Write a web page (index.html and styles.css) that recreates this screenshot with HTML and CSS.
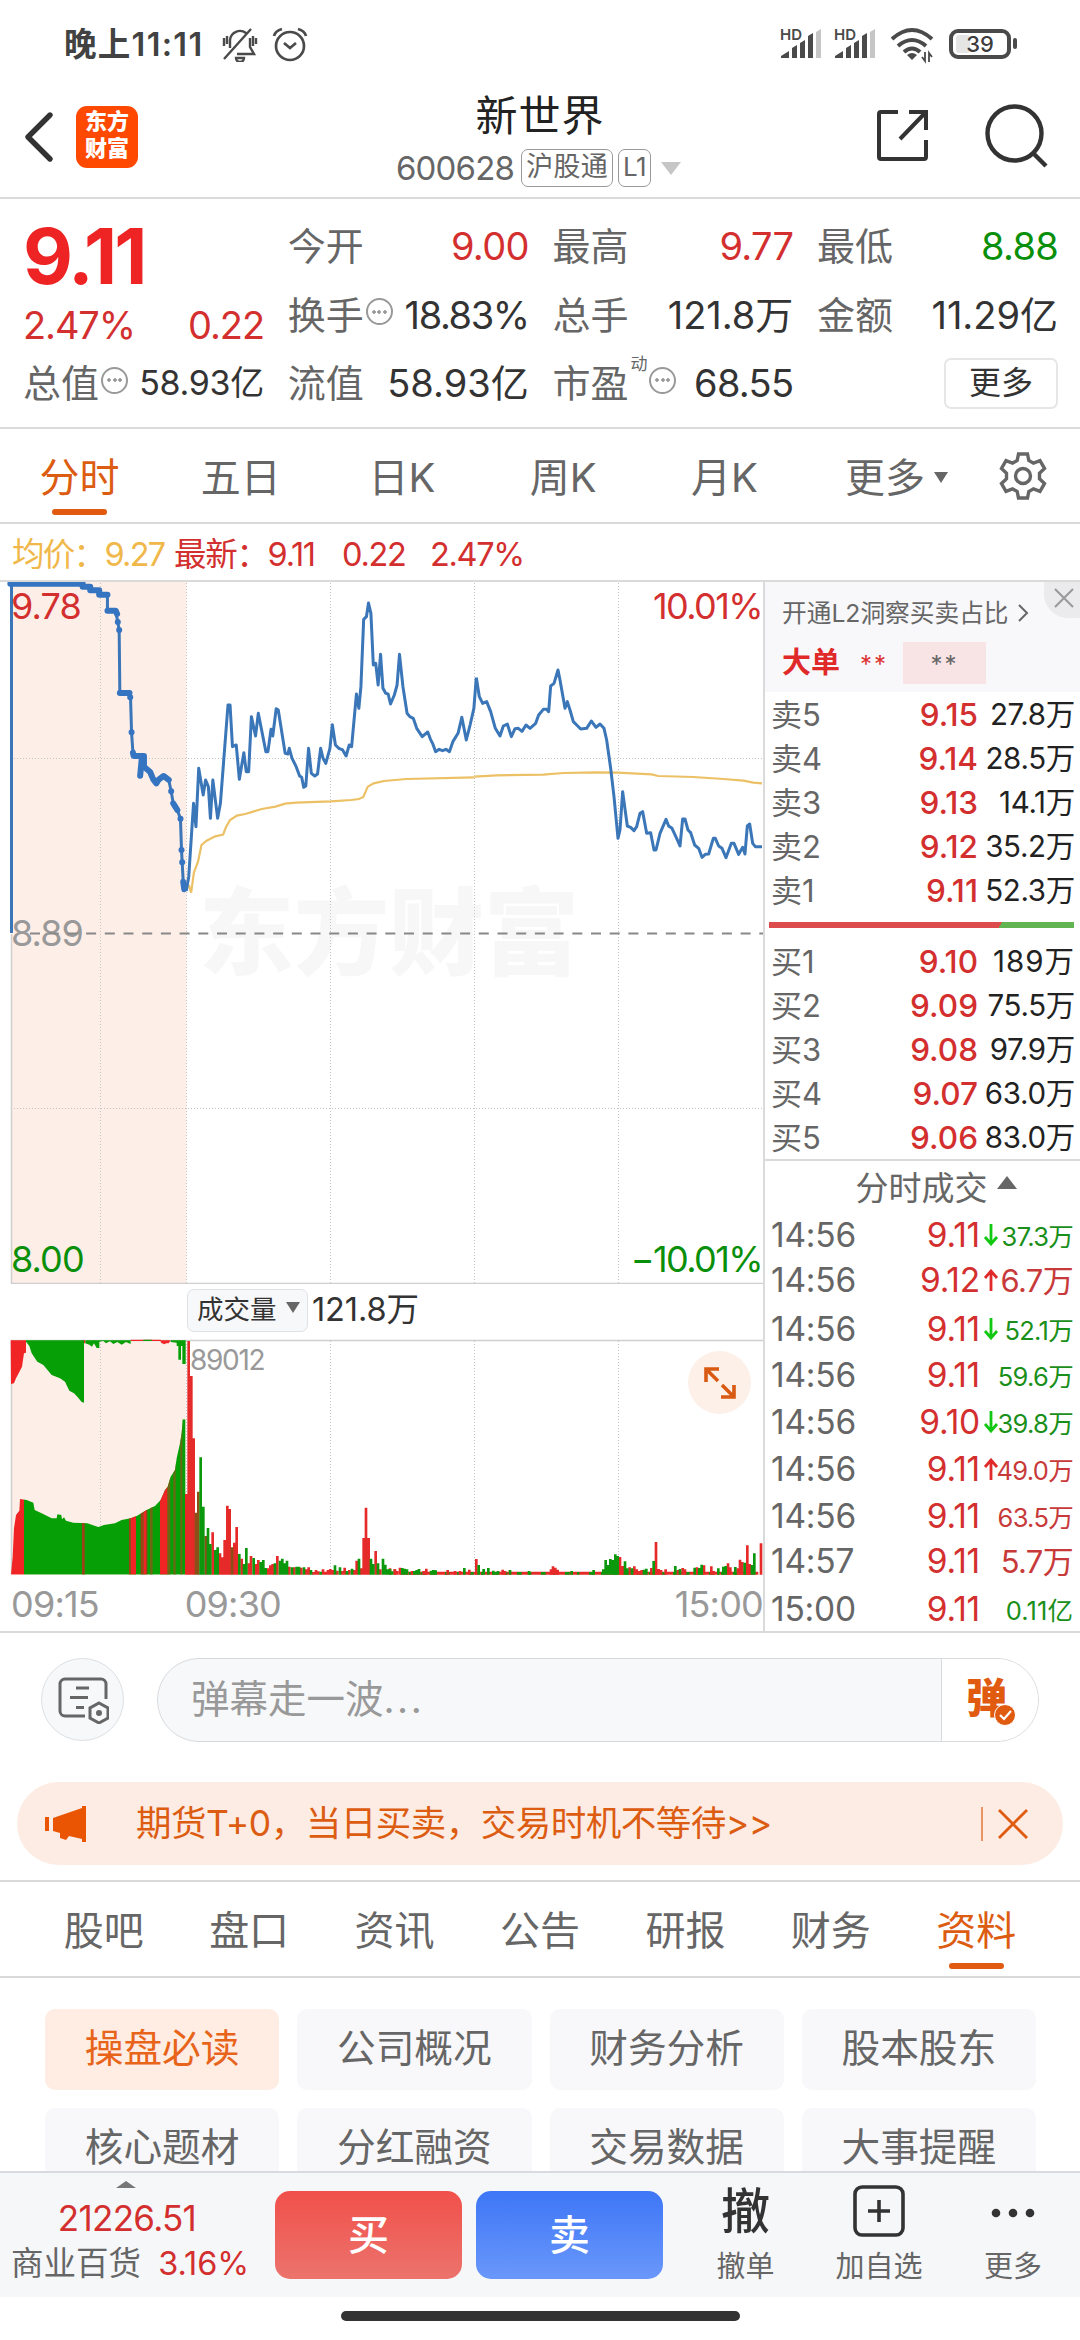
FILE: index.html
```html
<!DOCTYPE html>
<html lang="zh-CN">
<head>
<meta charset="utf-8">
<title>新世界 600628</title>
<link rel="stylesheet" href="styles.css">
</head>
<body>
<div class="status">
  <span class="clock">晚上11:11</span>
  <svg class="st-bell" width="36" height="36" viewBox="0 0 36 36" fill="none" stroke="#4a4a4a" stroke-width="2.4"><path d="M8 22V14a10 10 0 0 1 16-7M28 12v9l4 7H15M2 33L29 3M14 32a4 4 0 0 0 8 0zM2 12v8M5 10v8M31 10v10M34 12v6"/></svg>
  <svg class="st-alarm" width="36" height="36" viewBox="0 0 36 36" fill="none" stroke="#4a4a4a" stroke-width="2.7"><circle cx="18" cy="20" r="14"/><path d="M12 17l6 5 6-5M2 10C3 6 6 4 10 3M34 10c-1-4-4-6-8-7"/></svg>
  <svg class="st-right" width="240" height="40" viewBox="0 0 240 40">
    <g fill="#4a4a4a"><text x="0" y="16" font-size="15" font-weight="600">HD</text><path d="M1 34v-2l8-5v7zM12 34V24l5-3v13zM20 34V19l5-3v18zM28 34V12l5-3v25z"/><path fill="#c6c6c6" d="M36 34V8l5-3v29z"/></g>
    <g fill="#4a4a4a" transform="translate(54 0)"><text x="0" y="16" font-size="15" font-weight="600">HD</text><path d="M1 34v-2l8-5v7zM12 34V24l5-3v13zM20 34V19l5-3v18zM28 34V12l5-3v25z"/><path fill="#c6c6c6" d="M36 34V8l5-3v29z"/></g>
    <g fill="none" stroke="#4a4a4a" stroke-width="4"><path d="M112 15Q132 -3 152 15M118 22Q132 10 146 22M124 28Q132 21 140 28"/></g>
    <path fill="#4a4a4a" d="M127 31q5-4 10 0l-5 5z"/><path d="M145 28v9l-3-4M149 38v-9l3 4" fill="none" stroke="#4a4a4a" stroke-width="1.8"/>
    <rect x="171" y="7" width="58" height="26" rx="7" fill="none" stroke="#4a4a4a" stroke-width="4"/><rect x="176" y="11" width="14" height="18" rx="3" fill="#e5e5e5"/><rect x="233" y="14" width="4" height="11" rx="2" fill="#4a4a4a"/>
    <text x="200" y="28" font-size="22" font-weight="500" text-anchor="middle" fill="#3c3c3c">39</text>
  </svg>
</div>

<header class="head">
  <svg class="back" width="30" height="52" viewBox="0 0 30 52" fill="none" stroke="#333" stroke-width="5.4" stroke-linecap="round" stroke-linejoin="round"><path d="M26 4L4 26l22 22"/></svg>
  <div class="logo">东方<br>财富</div>
  <div class="title">
    <div class="name">新世界</div>
    <div class="code"><span>600628</span><span class="tag">沪股通</span><span class="tag l1">L1</span><i class="caret"></i></div>
  </div>
  <svg class="share" width="54" height="54" viewBox="0 0 54 54" fill="none" stroke="#333" stroke-width="4"><path d="M22 3H5a2 2 0 0 0-2 2v43a2 2 0 0 0 2 2h43a2 2 0 0 0 2-2V31M33 3h17v18M50 3L24 30"/></svg>
  <svg class="search" width="64" height="66" viewBox="0 0 64 66" fill="none" stroke="#333" stroke-width="4.4"><circle cx="29.500" cy="30.500" r="27"/><path d="M48 50l13 13"/></svg>
</header>

<section class="quote">
  <div class="col">
    <div class="big">9.11</div>
    <div class="chg"><span>2.47%</span><span>0.22</span></div>
    <div class="kv small"><label>总值<i class="dots"></i></label><b>58.93亿</b></div>
  </div>
  <div class="col">
    <div class="kv"><label>今开</label><b class="red">9.00</b></div>
    <div class="kv"><label>换手<i class="dots"></i></label><b class="pct">18.83%</b></div>
    <div class="kv"><label>流值</label><b class="cn">58.93亿</b></div>
  </div>
  <div class="col">
    <div class="kv"><label>最高</label><b class="red">9.77</b></div>
    <div class="kv"><label>总手</label><b class="cn">121.8万</b></div>
    <div class="kv"><label>市盈<sup>动</sup><i class="dots"></i></label><b>68.55</b></div>
  </div>
  <div class="col">
    <div class="kv"><label>最低</label><b class="green">8.88</b></div>
    <div class="kv"><label>金额</label><b class="cn">11.29亿</b></div>
    <div class="kv end"><span class="morebtn">更多</span></div>
  </div>
</section>

<nav class="periods">
  <span class="on">分时</span><span>五日</span><span>日K</span><span>周K</span><span>月K</span>
  <span class="pmore">更多<i class="tri"></i></span>
  <svg class="gear" width="48" height="48" viewBox="-24 -24 48 48" fill="none" stroke="#666" stroke-width="3.4"><circle r="7.500"/><path d="M-4.500-22h9l1.300 6.500 4.700 2.700 6.500-2.500 4.500 7.800L16.500-2.700v5.400l5 4.800-4.500 7.800-6.500-2.500-4.700 2.700L4.500 22h-9l-1.300-6.500-4.700-2.700-6.500 2.500-4.500-7.800 5-4.800v-5.400l-5-4.800 4.500-7.800 6.500 2.500 4.700-2.700z"/></svg>
</nav>

<section class="market">
  <div class="legend"><span class="avg">均价：9.27</span><span class="last">最新：9.11</span><span>0.22</span><span>2.47%</span></div>
  <div class="left">
    <svg class="chart" width="764" height="702" viewBox="0 582 764 702">
      <rect x="12" y="582" width="174.500" height="701" fill="#fdeee8"/>
      <text class="water" x="199" y="968" textLength="380">东方财富</text>
      <path class="grid" d="M100.500 583V1283M186.500 583V1283M330.500 583V1283M474.500 583V1283M618.500 583V1283M14 758.500H763M14 1108.500H763"/>
      <path d="M11.500 934V1283.500H763" fill="none" stroke="#cfcfcf" stroke-width="1.500"/>
      <text x="11" y="946" class="lab" fill="#999">8.89</text>
      <path d="M30 933.500H763" stroke="#888" stroke-width="2" stroke-dasharray="10 8.700"/>
      <g class="avgline">
        <polyline transform="translate(0 420) scale(.34439 .33333)" points="548,1395 555,1418 563,1358 575,1325 585,1275 600,1262 625,1249 648,1244 656,1222 668,1200 688,1187 712,1182 760,1167 800,1160 828,1151 860,1148 960,1144 1020,1140 1042,1137 1055,1131 1068,1100 1085,1090 1115,1083 1180,1077 1377,1072"/>
        <polyline transform="translate(350 520) scale(.33333)" points="373,770 440,766 580,764 640,759 740,757 804,758 905,763 925,768 1030,771 1120,777 1180,782 1210,788 1236,790"/>
      </g>
      <g class="priceline">
        <path d="M11.500 583V933"/>
        <g transform="translate(0 420) scale(.34439 .33333)">
          <polyline class="pre" points="35,492 238,492 240,500 262,502 266,511 288,513 292,523 312,525 312,572 336,574 342,606 346,630 348,819 376,819 379,832 382,937 386,998 388,1008 410,1008 407,1067 418,1012 420,1040 436,1058 445,1080 454,1090 475,1068 490,1080 497,1114 503,1150 515,1170 524,1196 527,1290 529,1327 532,1385 535,1408 541,1408"/>
          <path class="thick" d="M30 491H240V500H262V511H288V524H312M312 572H336L340 582M348 819H376M378 832h.1M382 937h.1M342 606h.1M346 630h.1M386 998L388 1008H418V1040L436 1056 445 1078 454 1090 460 1080 475 1068 490 1080M407 1067L412 1012M497 1114h.1M503 1150L515 1170 M524 1196h.1M527 1290h.1M529 1327h.1M532 1385L535 1408"/>
          <polyline points="541,1412 548,1370 562,1150 569,1220 577,1045 590,1125 597,1080 605,1100 611,1195 618,1080 632,1195 640,1150 662,855 668,855 675,980 686,975 695,1078 708,998 715,1055 722,1055 730,890 742,948 750,880 772,995 778,995 787,928 792,948 802,866 808,870 828,1000 836,1002 840,985 848,1015 860,1040 870,1068 876,1072 882,1102 888,1098 896,985 904,1060 914,1068 922,1062 931,985 938,1015 946,1030 958,985 965,914 974,975 984,985 995,990 1005,1008 1014,975 1021,980 1035,822 1042,865 1048,800 1056,598 1064,590 1070,549 1077,580 1084,735 1091,730 1098,795 1105,703 1112,805 1120,820 1127,822 1134,852 1145,825 1153,795 1160,703 1170,800 1182,880 1190,890 1200,895 1210,925 1226,950 1242,936 1250,958 1256,970 1265,995 1275,988 1285,992 1295,988 1305,995 1315,965 1330,940 1341,892 1354,960 1365,915 1376,865 1383,773"/>
        </g>
        <polyline transform="translate(350 520) scale(.33333)" points="379,473 388,530 398,550 410,545 422,575 436,625 450,648 460,618 472,612 484,650 495,626 505,625 516,634 528,615 540,625 557,610 566,585 580,568 590,568 596,575 602,498 612,490 624,450 630,480 645,565 652,545 660,570 670,605 680,615 692,627 710,625 724,603 738,622 750,612 762,625 770,660 782,745 792,830 804,955 810,930 818,815 824,860 832,918 842,922 852,932 860,920 870,880 878,875 890,940 902,938 912,990 918,990 930,940 948,898 956,918 966,925 980,955 990,978 998,897 1005,897 1014,930 1022,938 1034,975 1046,985 1056,1012 1066,1003 1076,1002 1090,955 1096,955 1106,978 1116,985 1128,1013 1144,970 1152,970 1166,1003 1178,982 1185,1002 1192,918 1199,912 1208,970 1216,980 1236,980"/>
      </g>
      <text x="11" y="619" class="lab" fill="#d32f2f">9.78</text>
      <text x="762" y="619" class="lab tight" text-anchor="end" fill="#d32f2f">10.01%</text>
      <text x="11" y="1272" class="lab" fill="#0a8f0a">8.00</text>
      <text x="762" y="1272" class="lab tight" text-anchor="end" fill="#0a8f0a">−10.01%</text>
    </svg>
    <div class="volhead"><span class="chip">成交量<i class="tri"></i></span><span class="vtot">121.8万</span></div>
    <div class="vol">
    <svg class="chart" width="764" height="238" viewBox="0 1339 764 238">
      <rect x="12" y="1340" width="174.500" height="235" fill="#fdeee8"/>
      <path class="grid" d="M100.500 1341V1574M186.500 1341V1574M330.500 1341V1574M474.500 1341V1574M618.500 1341V1574"/>
      <path d="M11.500 1574V1340.500H763" fill="none" stroke="#cfcfcf" stroke-width="1.500"/>
      <g transform="translate(0 1270) scale(.33333)">
        <path fill="#f02424" d="M32 211H78V248L72 250 66 290 56 310 48 325 42 340 33 342ZM246 211h10v9h-10zM392 209h90v4h-90zM480 211h32l-6 9h-8l-4 3-10-4z"/>
        <path fill="#06a006" d="M78 211H252V398L245 396 232 380 222 370 208 362 195 335 180 325 155 315 130 285 112 275 95 250 88 228 78 215ZM256 211V220L268 224 276 230 282 220 290 234H298V215L310 213 318 220 330 214 340 222 352 216 365 224 378 216 392 222V211ZM512 211H557V282H547V228H543V269H535V228H530V218L512 216ZM430 209h25v4h-25z"/>
        <clipPath id="pre"><path d="M33 914L38 860 42 775 48 735 58 722 60 687 80 690 100 698 104 720 125 730 155 745 170 745 172 733 184 735 186 748 192 742 198 752 220 758 262 760 295 771 312 765 345 760 365 750 392 745 410 738 440 720 465 708 482 690 495 660 503 650 512 620 525 600 530 565 540 520 545 490 548 448 557 448V914Z"/></clipPath>
        <g clip-path="url(#pre)"><path fill="#06a006" d="M72 400H557V914H72z"/><path fill="#f02424" d="M30 400H72V914H30zM392 400h16v514h-16zM480 400h23v514h-23zM430 400h8v514h-8z"/><path fill="#a0401a" d="M246 400h8v514h-8zM387 400h5v514h-5zM422 400h8v514h-8zM438 400h4v514h-4z"/><path fill="#6a6814" d="M450 400h8v514h-8zM503 400h8v514h-8zM520 400h7v514h-7zM541 400h6v514h-6z"/></g>
        <path stroke="#e62a2a" stroke-width="8" d="M559 914V672M566 914V213M574 914V318M581 914V505M638 914V787M660 914V850M667 914V862M674 914V810M682 914V707M689 914V717M703 914V818M710 914V771M725 914V866M746 914V880M753 914V858M768 914V882M775 914V870M804 914V895M811 914V886M818 914V882M832 914V858M868 914V890M883 914V892M904 914V893M919 914V898M926 914V892M940 914V906M948 914V900M955 914V904M969 914V898M976 914V905M984 914V900M991 914V897M998 914V900M1012 914V902M1027 914V903M1034 914V893M1048 914V900M1063 914V900M1070 914V872M1084 914V895M1091 914V804M1098 914V713M1106 914V804M1127 914V843M1141 914V898M1170 914V895M1184 914V898M1192 914V903"/>
        <path stroke="#8a5018" stroke-width="8" d="M588 914V728M595 914V665M617 914V798M696 914V832"/>
        <path stroke="#0c980c" stroke-width="8" d="M602 914V562M610 914V710M624 914V774M631 914V822M646 914V840M653 914V832M718 914V852M732 914V882M739 914V834M761 914V864M782 914V876M790 914V870M797 914V894M825 914V880M840 914V872M847 914V866M854 914V880M861 914V872M876 914V892M890 914V890M897 914V890M912 914V892M933 914V900M962 914V905M1005 914V886M1020 914V892M1041 914V903M1056 914V896M1077 914V866M1113 914V866M1120 914V882M1134 914V880M1149 914V866M1156 914V884M1163 914V898M1177 914V904"/>
      </g>
      <g transform="translate(390 1270) scale(.33333)">
        <path stroke="#e62a2a" stroke-width="9" d="M30 910H1105"/>
        <path stroke="#0c980c" stroke-width="8" stroke-dasharray="7 29 14 22" d="M57 910H1100"/>
        <path stroke="#e62a2a" stroke-width="8" d="M15 914V898M30 914V893M66 914V903M101 914V903M109 914V896M173 914V900M195 914V903M210 914V903M238 914V899M259 914V867M338 914V899M345 914V903M483 914V898M489 914V889M496 914V893M503 914V899M690 914V861M698 914V888M719 914V892M733 914V889M740 914V898M748 914V903M755 914V900M784 914V894M798 914V816M806 914V897M813 914V900M827 914V898M863 914V900M878 914V894M885 914V898M921 914V892M942 914V886M964 914V889M971 914V903M1014 914V880M1021 914V892M1043 914V895M1050 914V869M1057 914V876M1072 914V826M1079 914V882M1113 914V820"/>
        <path stroke="#0c980c" stroke-width="8" d="M0 914V897M37 914V894M44 914V896M51 914V898M73 914V903M80 914V900M87 914V897M123 914V902M130 914V900M137 914V901M223 914V894M266 914V885M281 914V897M295 914V894M310 914V902M324 914V903M360 914V900M417 914V903M545 914V903M611 914V900M640 914V898M647 914V870M654 914V885M661 914V867M668 914V870M676 914V853M683 914V858M705 914V874M712 914V895M726 914V895M762 914V899M769 914V896M791 914V873M856 914V888M870 914V897M914 914V893M928 914V894M935 914V884M985 914V895M1000 914V890M1007 914V888M1036 914V891M1064 914V878M1086 914V885M1093 914V850"/>
      </g>
      <text x="190" y="1370" font-size="28" letter-spacing="-1.300" fill="#999">89012</text>
    </svg>
      <span class="expand"><svg width="32" height="32" viewBox="0 0 32 32" fill="none" stroke="#d95a12" stroke-width="3.600"><path d="M2 15V2h13M2 2l12 12M30 18v12H17M30 30L18 18"/></svg></span>
    </div>
    <div class="times"><span>09:15</span><span class="t2">09:30</span><span>15:00</span></div>
  </div>
  <aside class="book">
    <div class="l2"><div class="l2a">开通L2洞察买卖占比<svg width="12" height="20" viewBox="0 0 12 20" fill="none" stroke="#666" stroke-width="2"><path d="M2 2l8 8-8 8"/></svg></div>
      <div class="l2b"><strong>大单</strong><em>**</em><span>**</span></div>
      <div class="x"><svg width="20" height="20" viewBox="0 0 20 20" stroke="#999" stroke-width="2"><path d="M1 1l18 18M19 1L1 19"/></svg></div>
    </div>
    <div class="lv">
      <p><span>卖5</span><b>9.15</b><i>27.8万</i></p><p><span>卖4</span><b>9.14</b><i>28.5万</i></p><p><span>卖3</span><b>9.13</b><i>14.1万</i></p><p><span>卖2</span><b>9.12</b><i>35.2万</i></p><p><span>卖1</span><b>9.11</b><i>52.3万</i></p>
    </div>
    <div class="ratio"></div>
    <div class="lv">
      <p><span>买1</span><b>9.10</b><i class="w">189万</i></p><p><span>买2</span><b>9.09</b><i>75.5万</i></p><p><span>买3</span><b>9.08</b><i>97.9万</i></p><p><span>买4</span><b>9.07</b><i>63.0万</i></p><p><span>买5</span><b>9.06</b><i>83.0万</i></p>
    </div>
    <div class="tt">分时成交<i></i></div>
    <div class="ticks">
      <p><span>14:56</span><b>9.11</b><svg class="dn" viewBox="0 0 16 22"><path d="M8 0v20M2 13l6 7 6-7"/></svg><i class="g">37.3万</i></p>
      <p><span>14:56</span><b>9.12</b><svg viewBox="0 0 16 22"><path d="M8 22V2M2 9l6-7 6 7"/></svg><i class="lg">6.7万</i></p>
      <p><span>14:56</span><b>9.11</b><svg class="dn" viewBox="0 0 16 22"><path d="M8 0v20M2 13l6 7 6-7"/></svg><i class="g">52.1万</i></p>
      <p><span>14:56</span><b>9.11</b><svg></svg><i class="g">59.6万</i></p>
      <p><span>14:56</span><b>9.10</b><svg class="dn" viewBox="0 0 16 22"><path d="M8 0v20M2 13l6 7 6-7"/></svg><i class="g">39.8万</i></p>
      <p><span>14:56</span><b>9.11</b><svg viewBox="0 0 16 22"><path d="M8 22V2M2 9l6-7 6 7"/></svg><i>49.0万</i></p>
      <p><span>14:56</span><b>9.11</b><svg></svg><i>63.5万</i></p>
      <p><span>14:57</span><b>9.11</b><svg></svg><i class="lg">5.7万</i></p>
      <p><span>15:00</span><b>9.11</b><svg></svg><i class="g w">0.11亿</i></p>
    </div>
  </aside>
</section>

<section class="danmu">
  <span class="round"><svg width="52" height="48" viewBox="0 0 52 48" fill="none" stroke="#666" stroke-width="3"><path d="M28 40H8a5 5 0 0 1-5-5V8a5 5 0 0 1 5-5h36a5 5 0 0 1 5 5v15M19 12h13M13 21.500h18M19 31.500h8" stroke-linecap="butt"/><path d="M42 27l9 5v10l-9 5-9-5V32z"/><circle cx="42" cy="37" r="1.500"/></svg></span>
  <div class="pill"><span class="ph">弹幕走一波<s>...</s></span><span class="dan">弹<svg width="22" height="22" viewBox="0 0 22 22"><circle cx="11" cy="11" r="10.500" fill="#e05a10" stroke="#fff"/><path d="M6 11l4 4 7-8" fill="none" stroke="#fff" stroke-width="2.200"/></svg></span></div>
</section>

<section class="banner">
  <svg width="42" height="38" viewBox="0 0 42 38" fill="#ea5504"><path d="M0 12h4v14H0zM8 13L37 3V1h4v36h-4v-3l-13-3-3 4-6-2v-5l-7-2z"/></svg>
  <span class="btext">期货T+0，当日买卖，交易时机不等待&gt;&gt;</span>
  <svg class="bx" width="48" height="34" viewBox="0 0 48 34" stroke="#e05a10" fill="none"><path d="M1 0v34" stroke-width="1.200"/><path d="M18 3l28 28M46 3L18 31" stroke-width="2.800"/></svg>
</section>

<nav class="subtabs"><span>股吧</span><span>盘口</span><span>资讯</span><span>公告</span><span>研报</span><span>财务</span><span class="on">资料</span></nav>

<section class="tiles"><span class="sel">操盘必读</span><span>公司概况</span><span>财务分析</span><span>股本股东</span><span>核心题材</span><span>分红融资</span><span>交易数据</span><span>大事提醒</span></section>

<footer class="bar">
  <div class="idx"><i></i><div class="iv">21226.51</div><div class="in"><span>商业百货</span><em>3.16%</em></div></div>
  <div class="btn buy">买</div><div class="btn sell">卖</div>
  <div class="act a1"><b>撤</b><span>撤单</span></div>
  <div class="act a2"><svg width="52" height="52" viewBox="0 0 52 52" fill="none" stroke="#333" stroke-width="3.600"><rect x="2" y="2" width="48" height="48" rx="7"/><path d="M26 15v22M15 26h22"/></svg><span>加自选</span></div>
  <div class="act a3"><svg width="52" height="52" viewBox="0 0 52 52" fill="#333"><circle cx="9" cy="28" r="4.300"/><circle cx="26" cy="28" r="4.300"/><circle cx="43" cy="28" r="4.300"/></svg><span>更多</span></div>
</footer>
<div class="home"><i></i></div>
</body>
</html>
```
FILE: styles.css
```css
* { box-sizing: border-box; }
body { margin: 0; width: 1080px; height: 2340px; overflow: hidden; background: #fff; color: #333; display: flex; flex-direction: column; font-family: Inter, "Noto Sans CJK SC", sans-serif; }
i, em { font-style: normal; }
p { margin: 0; }
svg { display: block; flex: none; }
.red { color: #d32f2f; }
.green { color: #0a8f0a; }

.status { height: 84px; display: flex; padding: 0 45px 0 64px; align-items: flex-start; }
.clock { width: 158px; font-size: 32.500px; font-weight: 600; line-height: 89px; letter-spacing: 1.300px; color: #424242; white-space: nowrap; }
.st-bell { margin-top: 26px; }
.st-alarm { margin: 26px 0 0 14px; }
.st-right { margin: 24px 15px 0 auto; overflow: visible; }

.head { height: 115px; display: flex; padding: 0 31px 0 24px; border-bottom: 2px solid #dadada; }
.back { margin-top: 27px; }
.logo { width: 62px; height: 62px; margin: 22px 0 0 22px; border-radius: 11px; background: #ff4800; color: #fff; font-size: 22px; font-weight: 900; line-height: 27px; text-align: center; padding-top: 2px; }
.title { width: 560px; margin-left: 122px; text-align: center; }
.name { margin-top: 9px; font-size: 42px; line-height: 46px; letter-spacing: 1px; color: #222; }
.code { display: flex; align-items: center; justify-content: center; height: 38px; margin: 10px 0 0 -3px; font-size: 33px; line-height: 38px; color: #666; letter-spacing: -.8px; }
.tag { height: 38px; margin-left: 7px; padding: 0 4px; border: 1.5px solid #999; border-radius: 7px; font-size: 27px; line-height: 34px; letter-spacing: .3px; }
.tag.l1 { width: 33px; margin-left: 5px; padding: 0 3px; font-size: 26px; letter-spacing: -.5px; }
.caret { margin-left: 10px; border: 10px solid transparent; border-top: 13px solid #c6c6c6; border-bottom: 0; }
.share { margin: 25px 0 0 56px; }
.search { margin: 19px 0 0 auto; }

.quote { height: 230px; display: grid; grid-template-columns: repeat(4, 241px); column-gap: 23.700px; padding: 13px 22px 0 23px; border-bottom: 2px solid #dadada; }
.col { display: flex; flex-direction: column; }
.kv { height: 68.500px; display: flex; align-items: center; justify-content: space-between; font-size: 38px; line-height: 68px; white-space: nowrap; }
.kv label { display: flex; align-items: center; font-size: 38px; color: #666; }
.kv b { font-weight: 400; letter-spacing: -.7px; }
.kv b.cn { letter-spacing: 0; }
.kv b.pct { letter-spacing: -1.400px; }
.kv.small b { font-size: 34px; letter-spacing: -.3px; }
.kv sup { font-size: 17px; line-height: 17px; margin: -38px 0 0 2px; }
.dots { width: 27px; height: 27px; margin: -6px 0 0 2px; border: 2px solid #999; border-radius: 50%; background: radial-gradient(circle, #999 1.500px, transparent 2px) center/6px 6px no-repeat, radial-gradient(circle, #999 1.500px, transparent 2px) 3px center/6px 6px no-repeat, radial-gradient(circle, #999 1.500px, transparent 2px) 14px center/6px 6px no-repeat; }
.big { height: 91px; font-size: 77px; font-weight: 700; line-height: 89px; letter-spacing: -2.800px; color: #ee2424; }
.chg { height: 46px; display: flex; justify-content: space-between; font-size: 38px; line-height: 44px; letter-spacing: -1.100px; color: #d32f2f; }
.kv.end { justify-content: flex-end; }
.morebtn { width: 114px; height: 51px; border: 2px solid #e6e6e6; border-radius: 7px; font-size: 32px; line-height: 45px; text-align: center; }

.periods { height: 95px; display: flex; border-bottom: 2px solid #dadada; font-size: 40px; line-height: 97px; color: #666; }
.periods span { width: 161.200px; text-align: center; position: relative; left: -1px; }
.periods .on, .subtabs .on { color: #dc5c12; }
.periods .on::after, .subtabs .on::after { content: ""; position: absolute; left: 50%; bottom: 7px; width: 55px; height: 6px; margin-left: -27.500px; border-radius: 3px; background: #e05a10; }
.tri { display: inline-block; border: 7px solid transparent; border-top: 11px solid #666; border-bottom: 0; vertical-align: middle; margin: -8px 0 0 9px; }
.periods .pmore { width: 189px; text-align: left; padding-left: 40px; }
.gear { margin-top: 23px; margin-left: 4px; }

.market { height: 1109px; display: grid; grid-template: 58px 1fr / 763px 317px; border-bottom: 2px solid #dadada; }
.legend { grid-column: 1 / 3; display: flex; padding-left: 12px; border-bottom: 2px solid #dadada; font-size: 32.500px; line-height: 61px; letter-spacing: -1.300px; color: #d32f2f; white-space: nowrap; }
.legend .avg { width: 162px; color: #f0b84a; letter-spacing: -1.700px; }
.legend .last { width: 168px; }
.legend span:nth-child(3) { width: 88px; }
.chart { font-family: Inter, "Noto Sans CJK SC", sans-serif; }
.lab { font-size: 36px; letter-spacing: -.9px; }
.lab.tight { letter-spacing: -1.600px; }
.water { font-size: 95px; font-weight: 900; fill: #f7f7f7; }
.grid { fill: none; stroke: #c4c4c4; stroke-width: 1; stroke-dasharray: 1 2; }
.avgline polyline { fill: none; stroke: #ecc064; stroke-width: 2.200; vector-effect: non-scaling-stroke; }
.priceline path, .priceline polyline { fill: none; stroke: #3a76b8; stroke-width: 3; stroke-linejoin: round; vector-effect: non-scaling-stroke; }
.priceline .thick { stroke: #3474c0; stroke-width: 6; stroke-linecap: round; }
.volhead { height: 55px; display: flex; align-items: center; padding: 0 0 2px 187px; font-size: 32.500px; letter-spacing: -.8px; }
.chip { width: 121px; height: 43px; margin-right: 4px; padding-left: 9px; border: 1.5px solid #dfe1e5; border-radius: 7px; background: #f7f8fa; font-size: 26.500px; line-height: 39px; letter-spacing: 0; white-space: nowrap; }
.vtot { line-height: 43px; margin-top: -3px; letter-spacing: -.1px; }
.vol { position: relative; height: 238px; }
.expand { position: absolute; left: 688px; top: 12px; width: 63px; height: 63px; border-radius: 50%; background: #fdf0e9; display: flex; align-items: center; justify-content: center; }
.times { display: flex; padding: 5px 0 0 11px; justify-content: space-between; font-size: 36px; line-height: 44px; letter-spacing: -.8px; color: #999; }
.t2 { margin: 0 308px 0 0; }

.book { border-left: 2px solid #dadada; }
.l2 { position: relative; height: 110px; padding: 11px 0 0 17px; background: #f8f8fb; color: #666; }
.l2a { display: flex; align-items: center; gap: 8px; font-size: 24.700px; line-height: 40px; white-space: nowrap; }
.l2b { display: flex; align-items: center; height: 42px; margin-top: 9px; }
.l2b strong { font-size: 29px; line-height: 42px; color: #e02a2a; }
.l2b em { width: 63px; padding: 2px 0 0 20px; font-size: 24px; letter-spacing: 2px; color: #d33; }
.l2b span { width: 83px; height: 42px; padding-top: 2px; font-size: 24px; letter-spacing: 2px; line-height: 42px; text-align: center; background: #f8e3e5; }
.x { position: absolute; right: 0; top: 0; width: 36px; height: 36px; padding: 6px 0 0 10px; border-radius: 0 0 0 24px; background: #ebebed; }
.lv { padding: 1px 6px 0 6px; }
.lv p { height: 44px; display: grid; grid-template-columns: 80px 127px 97px; font-size: 31px; line-height: 43px; white-space: nowrap; color: #666; }
.lv b { font-weight: 500; font-size: 31.500px; text-align: right; color: #d32f2f; letter-spacing: 0; }
.lv i { text-align: right; font-size: 29.500px; color: #222; letter-spacing: -.3px; }
.lv i.w { letter-spacing: 1px; }
.ratio { height: 6px; margin: 9px 6px 11px 4px; background: linear-gradient(120deg, #dc4c4c 75.500%, #62b450 75.600%); }
.tt { height: 55px; margin-top: -1px; padding: 0 0 4px 27px; border-top: 2px solid #dadada; display: flex; justify-content: center; align-items: center; font-size: 33px; color: #666; }
.tt i { margin: -6px 0 0 9px; border: 10px solid transparent; border-top: 0; border-bottom: 13px solid #666; }
.ticks { margin-top: -4px; padding: 0 7px 0 6px; }
.ticks p { height: 46.800px; display: grid; grid-template-columns: 90px 119px 16px 1fr; align-items: center; column-gap: 0; font-size: 33.500px; line-height: 46px; color: #666; white-space: nowrap; letter-spacing: -.2px; }
.ticks b { font-weight: 400; text-align: right; color: #d32f2f; }
.ticks svg { width: 16px; height: 22px; margin-left: 3px; fill: none; stroke: #e02a2a; stroke-width: 2.800; }
.ticks svg.dn { stroke: #12c812; }
.ticks i { padding-top: 4px; text-align: right; font-size: 25.500px; color: #c83a3a; letter-spacing: -.7px; }
.ticks i.g { color: #1a8f1a; }
.ticks i.w { letter-spacing: .1px; }
.ticks i.lg { padding-top: 1px; font-size: 31px; }

.danmu { height: 149px; display: flex; padding: 25px 41px 0; gap: 33px; }
.round { width: 83px; height: 83px; border: 1.5px solid #dcdfe4; border-radius: 50%; background: #f7f8fa; display: flex; align-items: center; justify-content: center; }
.pill { width: 882px; height: 84px; display: flex; overflow: hidden; border: 1.5px solid #d8dadd; border-radius: 42px; background: #f7f8fa; }
.ph { width: 784px; padding-left: 33px; font-size: 38.500px; line-height: 81px; color: #999; border-right: 1.5px solid #d8dadd; }
.ph s { text-decoration: none; letter-spacing: 2.500px; }
.dan { flex: 1; position: relative; padding-left: 24px; background: #fff; color: #e05a10; font-size: 41px; font-weight: 900; line-height: 79px; }
.dan svg { position: absolute; left: 52px; top: 45px; }

.banner { height: 83px; margin: 0 17px; padding-left: 28px; border-radius: 42px; background: #fcece3; display: flex; align-items: center; }
.btext { margin-left: 49px; font-size: 35.500px; line-height: 83px; letter-spacing: -.5px; color: #dc5c12; white-space: nowrap; }
.bx { margin-left: auto; margin-right: 34px; }

.subtabs { height: 98px; margin-top: 15px; padding: 0 31px; display: flex; border-top: 2px solid #dadada; border-bottom: 2px solid #dadada; font-size: 40px; line-height: 98px; color: #666; }
.subtabs span { flex: 1; text-align: center; position: relative; }
.tiles { height: 193px; overflow: hidden; padding: 31px 44px 0 45px; display: grid; grid-template-columns: repeat(4, 1fr); grid-auto-rows: 81px; gap: 18px; }
.tiles span { border-radius: 10px; background: #f8f8fa; font-size: 38.700px; line-height: 78px; text-align: center; color: #666; }
.tiles .sel { background: #ffede4; color: #e8641a; }

.bar { height: 126px; display: flex; border-top: 2px solid #d8dadf; background: #f6f7f9; }
.idx { width: 275px; padding-left: 11px; color: #d32f2f; }
.idx i { display: block; width: 0; margin: 8px 0 0 105px; border: 10px solid transparent; border-top: 0; border-bottom: 7px solid #777; }
.iv { width: 232px; margin-top: 8px; text-align: center; font-size: 35px; line-height: 44px; letter-spacing: -.7px; }
.in { display: flex; justify-content: space-between; width: 238px; font-size: 32.500px; line-height: 48px; letter-spacing: -.1px; white-space: nowrap; }
.in span { color: #666; letter-spacing: 0; }
.btn { width: 187px; height: 88px; margin: 18px 14px 0 0; border-radius: 15px; font-size: 41px; line-height: 88px; text-align: center; color: #fff; font-weight: 500; }
.buy { background: linear-gradient(#f1504a, #ec736d); }
.sell { background: linear-gradient(#3e76f6, #6a97fb); }
.act { display: flex; flex-direction: column; align-items: center; width: 134px; padding-top: 12px; font-size: 29px; color: #666; }
.act.a1 { width: 133px; margin-left: 2px; }
.act b { height: 52px; font-size: 49px; line-height: 54px; font-weight: 500; color: #333; }
.act span { line-height: 44px; margin-top: 8px; }
.home { display: flex; justify-content: center; padding-top: 14px; }
.home i { width: 399px; height: 10px; border-radius: 5px; background: #333; }
```
